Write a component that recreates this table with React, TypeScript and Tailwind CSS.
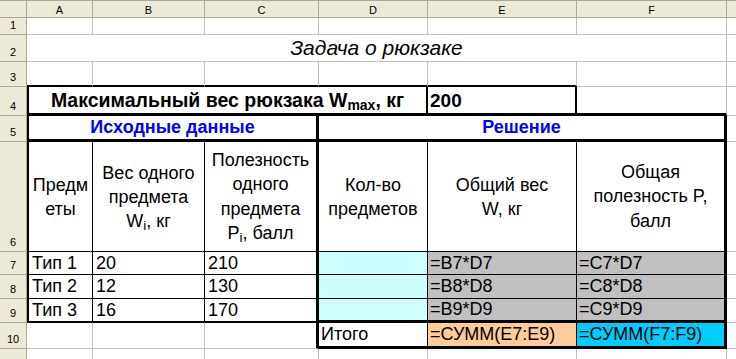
import type { ReactNode } from 'react';

type P = { children?: ReactNode; className?: string };

// spreadsheet chrome: column letters / row numbers
function ColHead({ children, className = '' }: P) {
  return (
    <div
      className={
        'flex items-end justify-center pb-[1px] bg-[#ece9d8] border-t border-r border-b border-[#aca899] text-[11px] leading-none text-black ' +
        className
      }
    >
      {children}
    </div>
  );
}

function RowHead({ children }: P) {
  return (
    <div className="flex items-end justify-center pb-[3px] bg-[#ece9d8] border-r border-b border-[#aca899] text-[11px] leading-none text-black">
      {children}
    </div>
  );
}

function Cell({ children, className = '' }: P) {
  return (
    <div className={'flex items-center overflow-hidden whitespace-nowrap text-[18px] leading-[21px] ' + className}>
      {children}
    </div>
  );
}

const grid = 'border-r border-b border-[#c0c0c0]';
const gEnd = 'border-b border-[#c0c0c0]';

export default function App() {
  return (
    <div className="w-[736px] h-[359px] overflow-hidden bg-white text-black font-['Liberation_Sans',Arial,sans-serif]">
      <div className="grid grid-cols-[27px_66px_112px_114px_109px_149px_150px_1fr] grid-rows-[18px_17px_27px_25px_29px_26px_110px_23px_24px_24px_26px_30px]">
        {/* header row */}
        <ColHead />
        {['A', 'B', 'C', 'D', 'E', 'F'].map((c) => (
          <ColHead key={c}>{c}</ColHead>
        ))}
        <ColHead className="border-r-0" />

        {/* row 1 */}
        <RowHead>1</RowHead>
        <Cell className={grid} />
        <Cell className={grid} />
        <Cell className={grid} />
        <Cell className={grid} />
        <Cell className={grid} />
        <Cell className={grid} />
        <Cell className={gEnd} />

        {/* row 2 */}
        <RowHead>2</RowHead>
        <Cell className={'col-span-6 justify-center italic text-[21px] leading-[24px] ' + grid}>Задача о рюкзаке</Cell>
        <Cell className={gEnd} />

        {/* row 3 */}
        <RowHead>3</RowHead>
        <Cell className="border-r border-r-[#c0c0c0] border-b-2 border-b-black" />
        <Cell className="border-r border-r-[#c0c0c0] border-b-2 border-b-black" />
        <Cell className="border-r border-r-[#c0c0c0] border-b-2 border-b-black" />
        <Cell className="border-r border-r-[#c0c0c0] border-b-2 border-b-black" />
        <Cell className="border-r border-r-[#c0c0c0] border-b-2 border-b-black" />
        <Cell className={grid} />
        <Cell className={gEnd} />

        {/* row 4 */}
        <RowHead>4</RowHead>
        <Cell className="col-span-4 justify-center font-bold text-[19.5px] border-l-2 border-r-2 border-b-[3px] border-black">
          <span>
            Максимальный вес рюкзака W<sub className="text-[14px]">max</sub>, кг
          </span>
        </Cell>
        <Cell className="pl-[2px] font-bold text-[19px] border-r-2 border-b-[3px] border-black">200</Cell>
        <Cell className="border-r border-r-[#c0c0c0] border-b-[3px] border-b-black" />
        <Cell className={gEnd} />

        {/* row 5 */}
        <RowHead>5</RowHead>
        <Cell className="col-span-3 justify-center font-bold text-[#0000ff] border-l-2 border-r-[3px] border-b-[3px] border-black">
          Исходные данные
        </Cell>
        <Cell className="col-span-3 justify-center font-bold text-[#0000ff] border-r-[3px] border-b-[3px] border-black">
          Решение
        </Cell>
        <Cell className={gEnd} />

        {/* row 6 – column captions */}
        <RowHead>6</RowHead>
        <Cell className="justify-center text-center whitespace-normal leading-[24px] border-l-2 border-r border-b border-black">
          <span>
            Предм
            <br />
            еты
          </span>
        </Cell>
        <Cell className="justify-center text-center whitespace-normal leading-[24px] border-r border-b border-black">
          <span>
            Вес одного
            <br />
            предмета
            <br />W<sub>i</sub>, кг
          </span>
        </Cell>
        <Cell className="justify-center text-center whitespace-normal leading-[24.5px] border-r-[3px] border-b border-black">
          <span>
            Полезность
            <br />
            одного
            <br />
            предмета
            <br />P<sub>i</sub>, балл
          </span>
        </Cell>
        <Cell className="justify-center text-center whitespace-normal leading-[24px] border-r border-b border-black">
          <span>
            Кол-во
            <br />
            предметов
          </span>
        </Cell>
        <Cell className="justify-center text-center whitespace-normal leading-[24px] border-r border-b border-black">
          <span>
            Общий вес
            <br />
            W, кг
          </span>
        </Cell>
        <Cell className="justify-center text-center whitespace-normal leading-[24.5px] border-r-[3px] border-b border-black">
          <span>
            Общая
            <br />
            полезность P,
            <br />
            балл
          </span>
        </Cell>
        <Cell className={gEnd} />

        {/* rows 7-8 */}
        {[
          ['7', 'Тип 1', '20', '210'],
          ['8', 'Тип 2', '12', '130'],
        ].map(([n, t, w, p]) => (
          <RowRest key={n} n={n} t={t} w={w} p={p} />
        ))}

        {/* row 9 */}
        <RowHead>9</RowHead>
        <Cell className="pl-[3px] border-l-2 border-r border-b-2 border-black">Тип 3</Cell>
        <Cell className="pl-[3px] border-r border-b-2 border-black">16</Cell>
        <Cell className="pl-[3px] border-r-[3px] border-b-2 border-black">170</Cell>
        <Cell className="bg-[#ccffff] border-r border-b-[3px] border-black" />
        <Cell className="pl-[2px] bg-[#c0c0c0] border-r border-b-[3px] border-black">=B9*D9</Cell>
        <Cell className="pl-[2px] bg-[#c0c0c0] border-r-[3px] border-b-[3px] border-black">=C9*D9</Cell>
        <Cell className={gEnd} />

        {/* row 10 – totals */}
        <RowHead>10</RowHead>
        <Cell className={grid} />
        <Cell className={grid} />
        <Cell className="border-r-[3px] border-r-black border-b border-b-[#c0c0c0]" />
        <Cell className="pl-[2px] border-r border-b-[3px] border-black">Итого</Cell>
        <Cell className="pl-[2px] bg-[#ffcc99] border-r border-b-[3px] border-black">=СУММ(E7:E9)</Cell>
        <Cell className="pl-[2px] bg-[#00ccff] border-r-[3px] border-b-[3px] border-black">=СУММ(F7:F9)</Cell>
        <Cell className={gEnd} />

        {/* row 11 */}
        <RowHead>11</RowHead>
        <Cell className={grid} />
        <Cell className={grid} />
        <Cell className={grid} />
        <Cell className={grid} />
        <Cell className={grid} />
        <Cell className={grid} />
        <Cell className={gEnd} />
      </div>
    </div>
  );
}

function RowRest({ n, t, w, p }: { n: string; t: string; w: string; p: string }) {
  return (
    <>
      <RowHead>{n}</RowHead>
      <Cell className="pl-[3px] border-l-2 border-r border-b border-black">{t}</Cell>
      <Cell className="pl-[3px] border-r border-b border-black">{w}</Cell>
      <Cell className="pl-[3px] border-r-[3px] border-b border-black">{p}</Cell>
      <Cell className="bg-[#ccffff] border-r border-b border-black" />
      <Cell className="pl-[2px] bg-[#c0c0c0] border-r border-b border-black">{'=B' + n + '*D' + n}</Cell>
      <Cell className="pl-[2px] bg-[#c0c0c0] border-r-[3px] border-b border-black">{'=C' + n + '*D' + n}</Cell>
      <Cell className={gEnd} />
    </>
  );
}
